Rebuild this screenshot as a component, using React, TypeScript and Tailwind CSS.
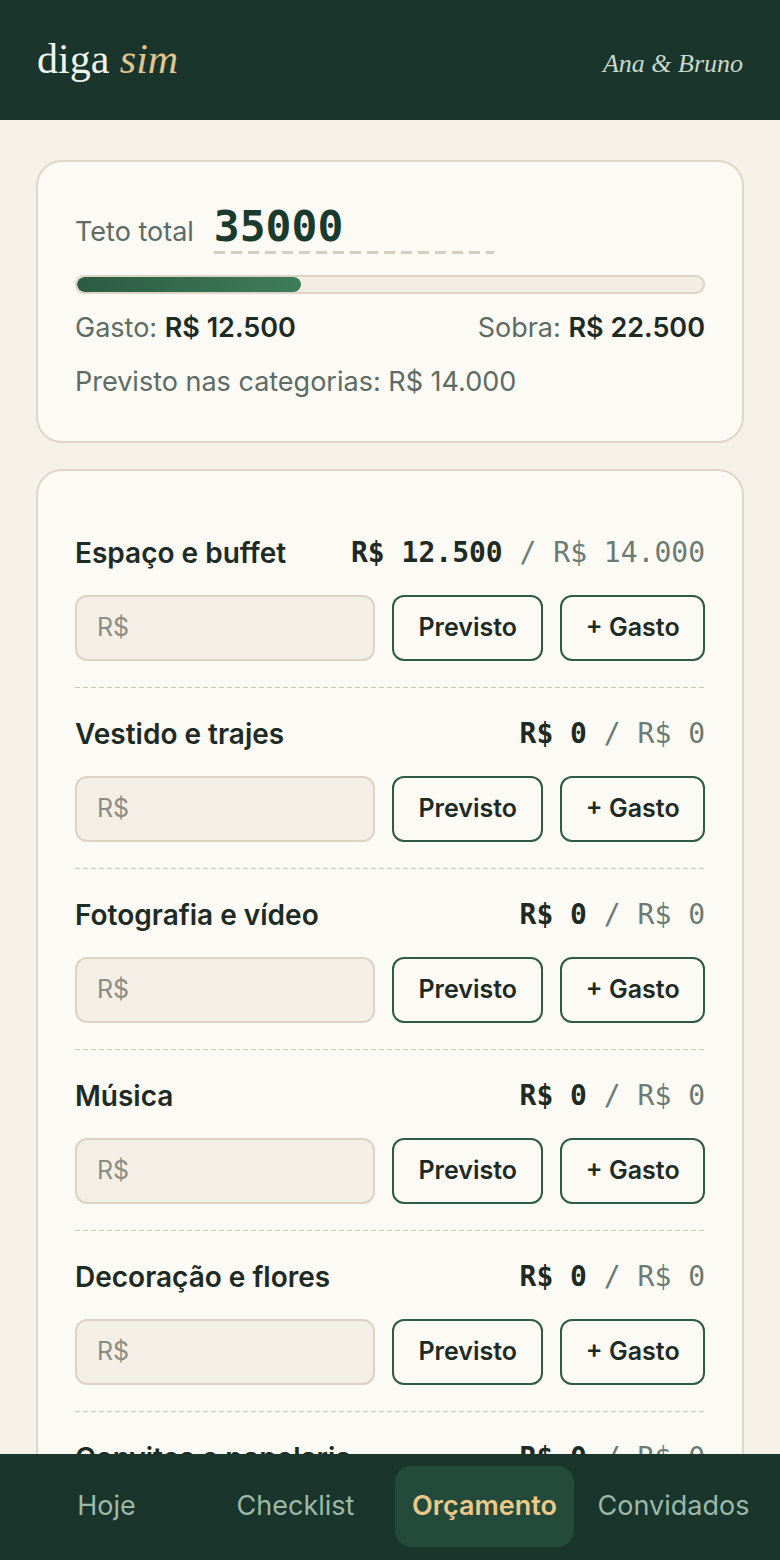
import { useState } from 'react'

const categories = [
  { name: 'Espaço e buffet', spent: 'R$ 12.500', planned: 'R$ 14.000' },
  { name: 'Vestido e trajes', spent: 'R$ 0', planned: 'R$ 0' },
  { name: 'Fotografia e vídeo', spent: 'R$ 0', planned: 'R$ 0' },
  { name: 'Música', spent: 'R$ 0', planned: 'R$ 0' },
  { name: 'Decoração e flores', spent: 'R$ 0', planned: 'R$ 0' },
  { name: 'Convites e papelaria', spent: 'R$ 0', planned: 'R$ 0' },
  { name: 'Alianças', spent: 'R$ 0', planned: 'R$ 0' },
]

const tabs = ['Hoje', 'Checklist', 'Orçamento', 'Convidados']

const sans = "font-['Inter','Noto_Sans',sans-serif]"
const mono = "font-['DejaVu_Sans_Mono','Liberation_Mono',monospace]"
const serif = "font-['Liberation_Serif','DejaVu_Serif',serif]"

export default function App() {
  const [total, setTotal] = useState('35000')
  const [active, setActive] = useState('Orçamento')
  const pct = (12500 / 35000) * 100

  return (
    <div className={`min-h-screen bg-[#f5f1e9] pb-[130px] ${sans}`}>
      {/* Header */}
      <header className="h-[120px] bg-[#1a352b] px-[37px] flex items-center justify-between">
        <div className={`${serif} text-[42px] leading-none text-[#eef4ee] -mt-[2px]`}>
          diga <span className="italic text-[#e2c48f]">sim</span>
        </div>
        <div className={`${serif} italic text-[26px] text-[#c9d8cc] mt-[6px]`}>Ana &amp; Bruno</div>
      </header>

      <main className="px-[36px] pt-[40px] flex flex-col gap-[26px]">
        {/* Resumo */}
        <section className="bg-[#fcfaf5] border-2 border-[#e0d6c7] rounded-[26px] px-[37px] pt-[39px] pb-[42px]">
          <div className="flex items-baseline gap-[20px]">
            <span className="text-[27px] text-[#5d6b64]">Teto total</span>
            <div className="w-[280px]">
              <input
                value={total}
                onChange={(e) => setTotal(e.target.value)}
                className={`${mono} w-full bg-transparent outline-none text-[43px] font-bold text-[#1b3a2e] leading-[50px]`}
              />
              <div className="h-[3px] bg-[repeating-linear-gradient(90deg,#d7cebf_0_11px,transparent_11px_17px)]" />
            </div>
          </div>

          <div className="mt-[21px] h-[19px] rounded-full bg-[#f2eee6] border-2 border-[#ddd4c6] overflow-hidden">
            <div
              className="h-full rounded-full bg-gradient-to-r from-[#2c5b44] to-[#3f7d5a]"
              style={{ width: `${pct}%` }}
            />
          </div>

          <div className="mt-[17px] flex justify-between text-[27px] leading-[34px] text-[#5d6b64]">
            <span>
              Gasto: <b className="font-semibold text-[#1e2a24]">R$ 12.500</b>
            </span>
            <span>
              Sobra: <b className="font-semibold text-[#1e2a24]">R$ 22.500</b>
            </span>
          </div>
          <p className="mt-[20px] text-[27px] leading-[34px] text-[#5d6b64]">Previsto nas categorias: R$ 14.000</p>
        </section>

        {/* Categorias */}
        <section className="bg-[#fcfaf5] border-2 border-[#e0d6c7] rounded-[26px] px-[37px] pt-[36px]">
          {categories.map((c) => (
            <div key={c.name}>
              <div className="pt-[28px] pb-[26px]">
                <div className="flex items-center justify-between h-[36px]">
                  <h3 className="text-[28px] font-semibold text-[#1e2a24]">{c.name}</h3>
                  <div className={`${mono} text-[28px] whitespace-pre`}>
                    <span className="font-bold text-[#1e2a24]">{c.spent}</span>
                    <span className="text-[#6b7a72]">{' / ' + c.planned}</span>
                  </div>
                </div>
                <div className="mt-[24px] flex gap-[17px] h-[66px]">
                  <input
                    placeholder="R$"
                    className="w-[300px] rounded-[12px] bg-[#f3efe6] border-2 border-[#ddd3c2] px-[20px] text-[25px] text-[#1e2a24] placeholder:text-[#8b8c84] outline-none"
                  />
                  <button className="w-[152px] rounded-[12px] border-2 border-[#2e5a46] bg-[#fcfaf5] text-[25px] font-semibold text-[#1e2a24]">
                    Previsto
                  </button>
                  <button className="w-[145px] rounded-[12px] border-2 border-[#2e5a46] bg-[#fcfaf5] text-[25px] font-semibold text-[#1e2a24]">
                    + Gasto
                  </button>
                </div>
              </div>
              <div className="h-px bg-[repeating-linear-gradient(90deg,#d3c9b8_0_5px,transparent_5px_8px)]" />
            </div>
          ))}
        </section>
      </main>

      {/* Bottom nav */}
      <nav className="fixed bottom-0 left-0 right-0 h-[106px] bg-[#1a352b] px-[12px] grid grid-cols-4 items-center">
        {tabs.map((t) => (
          <button
            key={t}
            onClick={() => setActive(t)}
            className={`mx-[5px] h-[81px] -mt-[1px] rounded-[16px] text-[27px] ${
              active === t ? 'bg-[#234a3a] text-[#ecc98a] font-semibold' : 'text-[#9db9a7]'
            }`}
          >
            {t}
          </button>
        ))}
      </nav>
    </div>
  )
}
